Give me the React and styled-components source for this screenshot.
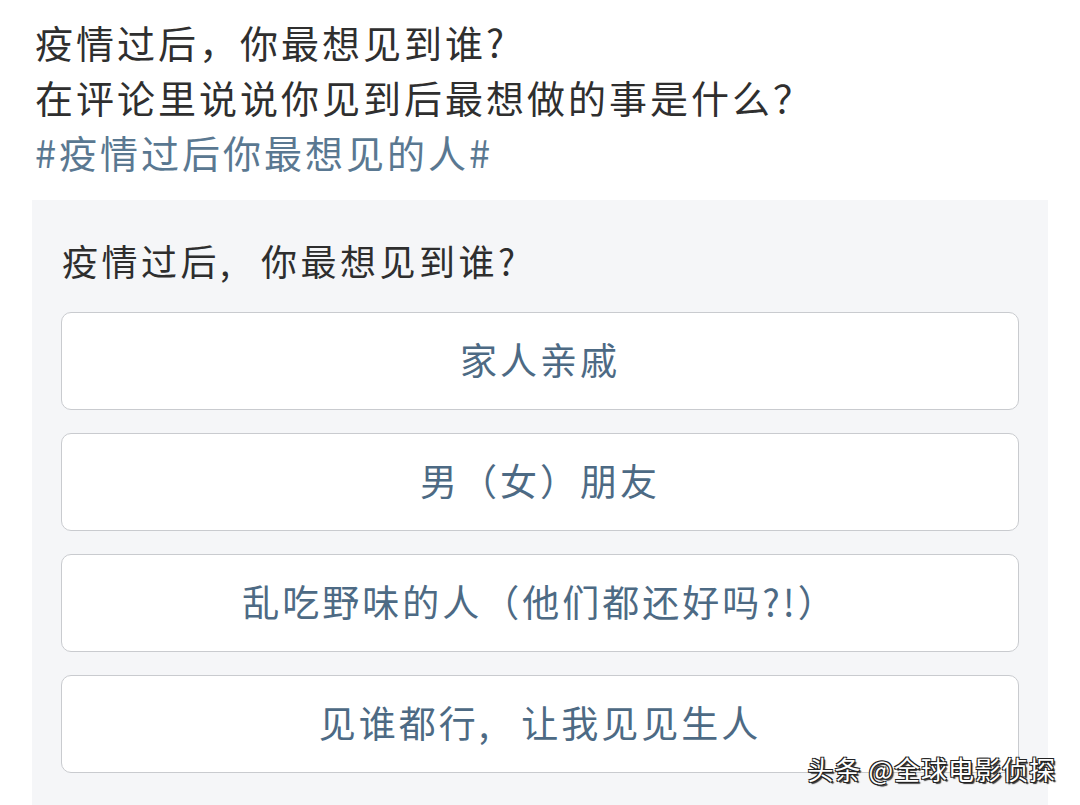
import React from "react";
import styled, { createGlobalStyle } from "styled-components";

const Global = createGlobalStyle`
  html, body { margin: 0; padding: 0; background: #ffffff; }
  body { font-family: "Noto Sans CJK SC", "Noto Sans", sans-serif; }
  #root { width: 1080px; height: 805px; overflow: hidden; position: relative; }
`;

const Page = styled.div`
  display: flex;
  flex-direction: column;
  padding: 14px 32px 0 32px;
  box-sizing: border-box;
  height: 805px;
`;

const Post = styled.div`
  padding-left: 3px;
  font-size: 38px;
  line-height: 55px;
  letter-spacing: 3px;
  color: #2f2f2f;
  margin-bottom: 21px;
`;

const Line = styled.div`
  white-space: nowrap;
`;

const Tag = styled.div`
  color: #5a7891;
  white-space: nowrap;
`;

const Card = styled.div`
  flex: 1;
  width: 1016px;
  background: #f5f6f8;
  padding: 40px 29px 0 29px;
  box-sizing: border-box;
  display: flex;
  flex-direction: column;
`;

const Title = styled.div`
  font-size: 36px;
  line-height: 40px;
  letter-spacing: 3.5px;
  word-spacing: 16px;
  color: #2e2e2e;
  margin-bottom: 32px;
  padding-left: 1px;
  white-space: pre;
`;

const Options = styled.div`
  display: flex;
  flex-direction: column;
  gap: 23px;
`;

const Option = styled.div`
  height: 98px;
  box-sizing: border-box;
  border: 1.5px solid #c9cbcf;
  border-radius: 10px;
  background: #ffffff;
  display: flex;
  align-items: center;
  justify-content: center;
  font-size: 37px;
  letter-spacing: 3px;
  word-spacing: 18px;
  color: #4d6a84;
  padding-bottom: 4px;
  white-space: pre;
`;

const Watermark = styled.div`
  position: absolute;
  right: 24px;
  bottom: 18px;
  font-size: 26px;
  letter-spacing: 1px;
  color: #ffffff;
  text-shadow: 1px 1px 0 #222, -1px -1px 0 #222, 1px -1px 0 #222, -1px 1px 0 #222, 2px 2px 1px #333;
  white-space: nowrap;
`;

export default function App() {
  const options = [
    "家人亲戚",
    "男（女）朋友",
    "乱吃野味的人（他们都还好吗?!）",
    "见谁都行, 让我见见生人",
  ];
  return (
    <>
      <Global />
      <Page>
        <Post>
          <Line>疫情过后，你最想见到谁?</Line>
          <Line>在评论里说说你见到后最想做的事是什么？</Line>
          <Tag>#疫情过后你最想见的人#</Tag>
        </Post>
        <Card>
          <Title>疫情过后, 你最想见到谁?</Title>
          <Options>
            {options.map((o) => (
              <Option key={o}>{o}</Option>
            ))}
          </Options>
        </Card>
      </Page>
      <Watermark>头条 @全球电影侦探</Watermark>
    </>
  );
}
